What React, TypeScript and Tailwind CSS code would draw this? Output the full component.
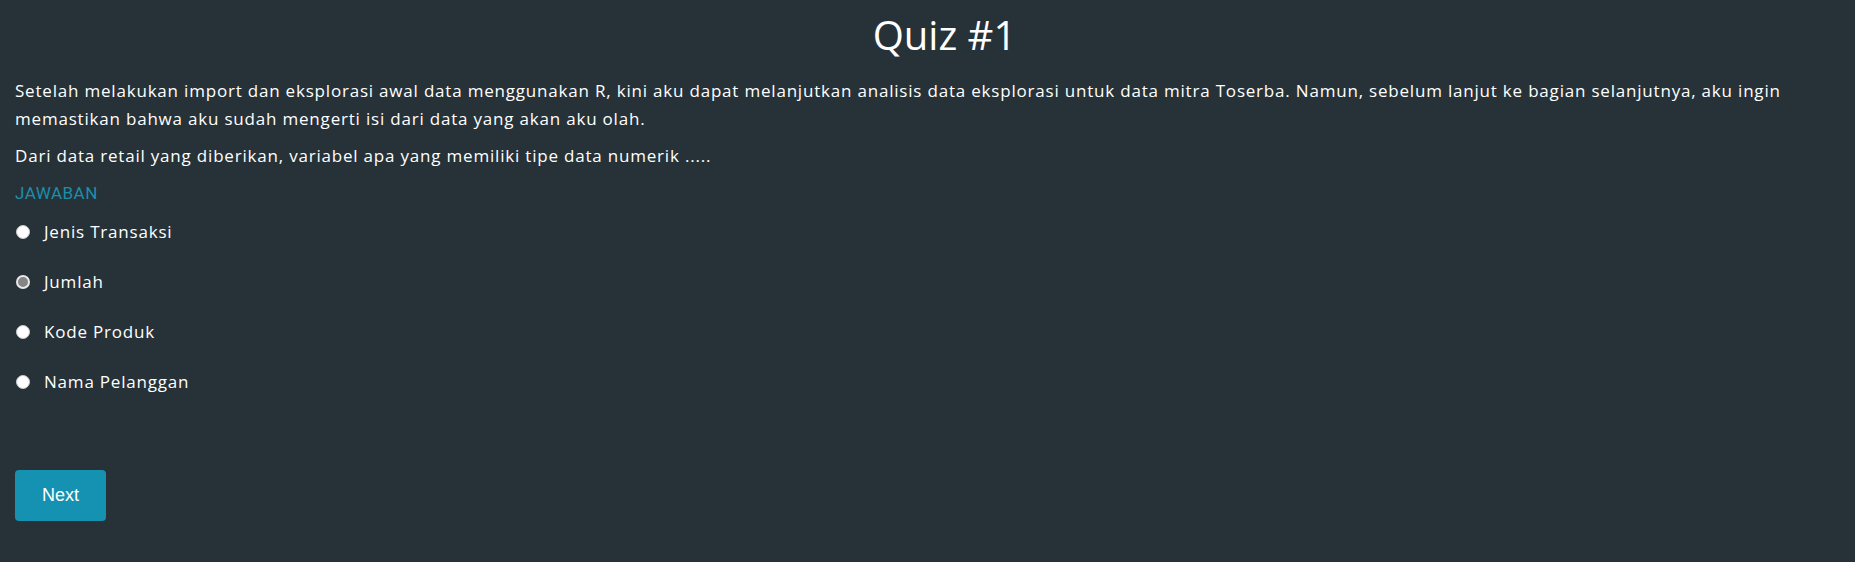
const options = [
  { label: "Jenis Transaksi", hover: false },
  { label: "Jumlah", hover: true },
  { label: "Kode Produk", hover: false },
  { label: "Nama Pelanggan", hover: false },
]

function Radio({ hover }: { hover: boolean }) {
  return (
    <span
      className={
        hover
          ? "block w-[14px] h-[14px] rounded-full border-[2px] border-[#e9e9e9] bg-[#858585]"
          : "block w-[14px] h-[14px] rounded-full border border-[#c8c8c8] bg-white"
      }
    />
  )
}

export default function App() {
  return (
    <div className="min-h-[562px] w-full bg-[#263238] text-white px-[15px] font-['Open_Sans',sans-serif]">
      <h1 className="pt-[11px] pl-[34px] text-center text-[40px] leading-[48px] font-medium">
        Quiz #1
      </h1>

      <p className="mt-[18px] text-[17px] leading-[28px] tracking-[0.8px]">
        Setelah melakukan import dan eksplorasi awal data menggunakan R, kini aku dapat melanjutkan analisis data eksplorasi untuk data mitra Toserba. Namun, sebelum lanjut ke bagian selanjutnya, aku ingin memastikan bahwa aku sudah mengerti isi dari data yang akan aku olah.
      </p>
      <p className="mt-[9px] text-[17px] leading-[28px] tracking-[0.8px]">
        Dari data retail yang diberikan, variabel apa yang memiliki tipe data numerik .....
      </p>

      <div className="mt-[11px] text-[17px] leading-[24px] tracking-[0.5px] text-[#1a8fab] font-['Roboto',sans-serif]">
        JAWABAN
      </div>

      <div className="mt-[2px] flex flex-col">
        {options.map((o) => (
          <label key={o.label} className="h-[50px] flex items-center gap-[14px] pl-[1px]">
            <Radio hover={o.hover} />
            <span className="text-[17px] tracking-[0.8px]">{o.label}</span>
          </label>
        ))}
      </div>

      <button className="mt-[63px] w-[91px] h-[51px] rounded-[4px] bg-[#1591b1] text-[18px] text-white font-['Liberation_Sans',sans-serif]">
        Next
      </button>
    </div>
  )
}
